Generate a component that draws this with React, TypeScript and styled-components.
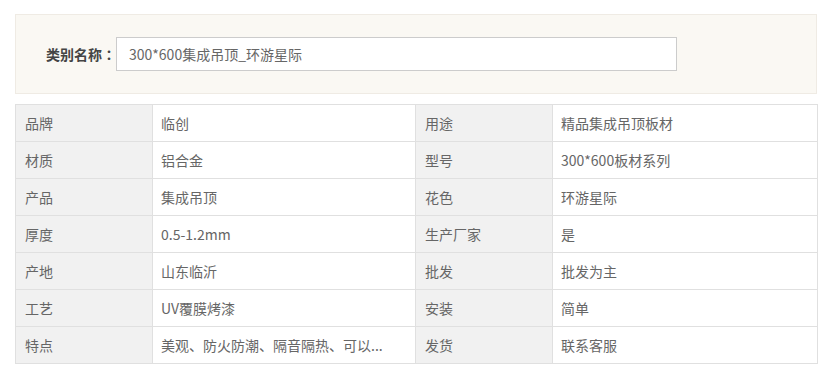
import React from "react";
import styled, { createGlobalStyle } from "styled-components";

const Global = createGlobalStyle`
  html, body { margin: 0; padding: 0; background: #fff; }
  body { font-family: "Noto Sans CJK SC", "Noto Sans", sans-serif; }
`;

const Page = styled.div`
  padding: 14px 15px 0 15px;
  width: 802px;
`;

const Panel = styled.div`
  box-sizing: border-box;
  height: 80px;
  border: 1px solid #efebe4;
  background: #faf8f3;
  display: flex;
  align-items: center;
  padding: 0 0 0 30px;
`;

const Label = styled.label`
  width: 70px;
  font-size: 14px;
  font-weight: bold;
  color: #444;
  white-space: nowrap;
`;

const Colon = styled.span`
  font-family: "Noto Sans CJK TC", "Noto Sans CJK SC", sans-serif;
`;

const Input = styled.input`
  box-sizing: border-box;
  width: 561px;
  height: 34px;
  border: 1px solid #ccc;
  background: #fff;
  padding: 0 12px;
  font-family: "Noto Sans CJK SC", "Noto Sans", sans-serif;
  font-size: 14px;
  color: #666;
  outline: none;
`;

const Table = styled.table`
  margin-top: 10px;
  width: 802px;
  border-collapse: collapse;
  table-layout: fixed;
`;

const Cell = styled.td<{ $head?: boolean; $w: number }>`
  box-sizing: border-box;
  width: ${(p) => p.$w}px;
  height: 37px;
  border: 1px solid #e0e0e0;
  background: ${(p) => (p.$head ? "#f1f1f1" : "#fff")};
  padding: 0 0 0 ${(p) => (p.$head ? 9 : 8)}px;
  font-size: 14px;
  color: #666;
  white-space: nowrap;
  overflow: hidden;
  text-overflow: ellipsis;
`;

const rows: [string, string, string, string][] = [
  ["品牌", "临创", "用途", "精品集成吊顶板材"],
  ["材质", "铝合金", "型号", "300*600板材系列"],
  ["产品", "集成吊顶", "花色", "环游星际"],
  ["厚度", "0.5-1.2mm", "生产厂家", "是"],
  ["产地", "山东临沂", "批发", "批发为主"],
  ["工艺", "UV覆膜烤漆", "安装", "简单"],
  ["特点", "美观、防火防潮、隔音隔热、可以...", "发货", "联系客服"],
];

export default function App() {
  return (
    <>
      <Global />
      <Page>
        <Panel>
          <Label>
            类别名称<Colon>：</Colon>
          </Label>
          <Input readOnly value="300*600集成吊顶_环游星际" />
        </Panel>
        <Table>
          <tbody>
            {rows.map((r) => (
              <tr key={r[0]}>
                <Cell $head $w={137}>{r[0]}</Cell>
                <Cell $w={263}>{r[1]}</Cell>
                <Cell $head $w={137}>{r[2]}</Cell>
                <Cell $w={265}>{r[3]}</Cell>
              </tr>
            ))}
          </tbody>
        </Table>
      </Page>
    </>
  );
}
